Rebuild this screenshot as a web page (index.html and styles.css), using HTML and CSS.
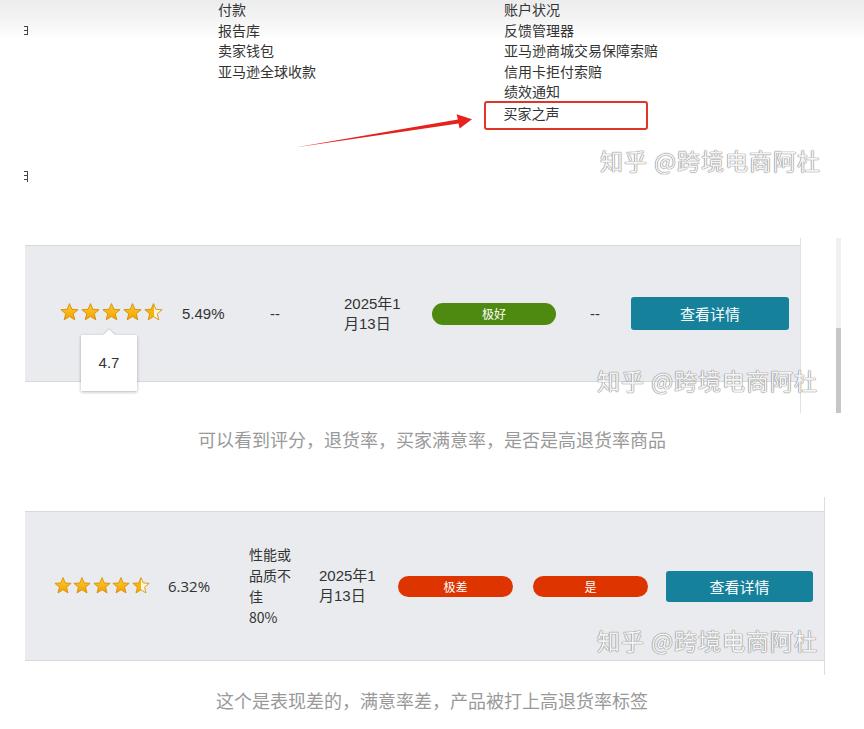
FILE: index.html
```html
<!DOCTYPE html>
<html lang="zh-CN">
<head>
    <meta charset="UTF-8">
    <meta name="viewport" content="width=device-width, initial-scale=1.0">
    <title>买家之声</title>
    <link rel="stylesheet" href="styles.css">
</head>
<body>

<svg class="defs" aria-hidden="true">
    <defs>
        <linearGradient id="gold" x1="0" y1="0" x2="0" y2="1">
            <stop offset="0" stop-color="#ffcb2e"/>
            <stop offset="1" stop-color="#f2a200"/>
        </linearGradient>
        <linearGradient id="half" x1="0" y1="0" x2="1" y2="0">
            <stop offset="0.5" stop-color="#f8b40c"/>
            <stop offset="0.5" stop-color="#fff7d8"/>
        </linearGradient>
        <symbol id="star" viewBox="0 0 20 20">
            <path d="M10 0.6 L12.47 6.6 L19.03 7.06 L13.99 11.3 L15.58 17.69 L10 14.2 L4.42 17.69 L6.01 11.3 L0.97 7.06 L7.53 6.6 Z" stroke="#d68a00" stroke-width="0.9" stroke-linejoin="round"/>
        </symbol>
    </defs>
</svg>

<!-- 菜单截图 -->
<div class="shot shot-menu">
    <div class="edge">
        <span class="edge-bit first"></span>
        <span class="edge-bit second"></span>
    </div>
    <ul class="menu col-left">
        <li>付款</li>
        <li>报告库</li>
        <li>卖家钱包</li>
        <li>亚马逊全球收款</li>
    </ul>
    <ul class="menu col-right">
        <li>账户状况</li>
        <li>反馈管理器</li>
        <li>亚马逊商城交易保障索赔</li>
        <li>信用卡拒付索赔</li>
        <li>绩效通知</li>
        <li class="boxed">买家之声</li>
    </ul>
    <svg class="arrow" width="180" height="40" viewBox="0 0 180 40">
        <polygon points="0,37.5 162.9,9.4 161.6,4.2 177,9.2 164.6,18.6 163.5,13.4" fill="#e5221c"/>
    </svg>
    <div class="mark mark-1">知乎 @跨境电商阿杜</div>
</div>

<!-- 表格截图一 -->
<div class="shot shot-table">
    <div class="frame frame-a">
        <div class="row row-a">
            <div class="cell stars-cell">
                <div class="stars">
                    <svg class="star"><use href="#star" fill="url(#gold)"/></svg>
                    <svg class="star"><use href="#star" fill="url(#gold)"/></svg>
                    <svg class="star"><use href="#star" fill="url(#gold)"/></svg>
                    <svg class="star"><use href="#star" fill="url(#gold)"/></svg>
                    <svg class="star"><use href="#star" fill="url(#half)"/></svg>
                </div>
                <div class="tip">4.7</div>
            </div>
            <div class="cell">5.49%</div>
            <div class="cell">--</div>
            <div class="cell date">2025年1<br>月13日</div>
            <div class="cell"><span class="pill good">极好</span></div>
            <div class="cell">--</div>
            <div class="cell"><span class="btn">查看详情</span></div>
        </div>
    </div>
    <div class="scrollbar"><div class="thumb"></div></div>
    <div class="mark mark-2">知乎 @跨境电商阿杜</div>
</div>

<p class="caption first-caption">可以看到评分，退货率，买家满意率，是否是高退货率商品</p>

<!-- 表格截图二 -->
<div class="shot shot-table second">
    <div class="frame frame-b">
        <div class="row row-b">
            <div class="cell">
                <div class="stars small">
                    <svg class="star"><use href="#star" fill="url(#gold)"/></svg>
                    <svg class="star"><use href="#star" fill="url(#gold)"/></svg>
                    <svg class="star"><use href="#star" fill="url(#gold)"/></svg>
                    <svg class="star"><use href="#star" fill="url(#gold)"/></svg>
                    <svg class="star"><use href="#star" fill="url(#half)"/></svg>
                </div>
            </div>
            <div class="cell pct">6.32%</div>
            <div class="cell reason">性能或<br>品质不<br>佳<br>80%</div>
            <div class="cell date">2025年1<br>月13日</div>
            <div class="cell"><span class="pill bad">极差</span></div>
            <div class="cell"><span class="pill bad">是</span></div>
            <div class="cell"><span class="btn small">查看详情</span></div>
        </div>
    </div>
    <div class="mark mark-3">知乎 @跨境电商阿杜</div>
</div>

<p class="caption">这个是表现差的，满意率差，产品被打上高退货率标签</p>

</body>
</html>
```

FILE: styles.css
```css
body {
    margin: 0;
    padding: 0;
    background-color: #ffffff;
    font-family: "Liberation Sans", "Noto Sans CJK SC", sans-serif;
    color: #333;
}

.defs {
    position: absolute;
    width: 0;
    height: 0;
}

.shot {
    position: relative;
}

/* 菜单 */
.shot-menu {
    height: 200px;
    display: flex;
    background: linear-gradient(#ececec, #f5f5f5 22px, #ffffff 40px);
    font-family: "Noto Sans CJK SC", sans-serif;
    font-size: 14px;
}

.edge {
    width: 4px;
    margin-left: 24px;
    display: flex;
    flex-direction: column;
}

/* 截图左边被裁掉的字 */
.edge-bit {
    display: block;
    width: 3px;
    height: 9px;
    background: repeating-linear-gradient(#444 0 1px, transparent 1px 4px);
    border-right: 1px solid #444;
}

.edge-bit.first {
    margin-top: 26px;
}

.edge-bit.second {
    margin-top: 136px;
    height: 11px;
}

.menu {
    list-style: none;
    margin: -1px 0 0;
    padding: 0;
}

.menu li {
    line-height: 20.6px;
    white-space: nowrap;
}

.col-left {
    margin-left: 190px;
    width: 286px;
}

.menu li.boxed {
    margin: -1px 0 0 -20px;
    width: 164px;
    box-sizing: border-box;
    border: 2.5px solid #e0352c;
    border-radius: 3px;
    padding: 0 0 5px 17.5px;
    line-height: 20px;
}

.arrow {
    position: absolute;
    left: 295px;
    top: 110px;
}

.mark {
    position: absolute;
    font-family: "Noto Sans CJK SC", sans-serif;
    font-size: 23px;
    line-height: 26px;
    letter-spacing: 1px;
    color: #f4f4f4;
    white-space: nowrap;
    text-shadow: 0 0 1px #8a8a8a, 0 0 1px #8a8a8a, 0 0 1px #8a8a8a;
}

.mark-1 {
    left: 600px;
    top: 147px;
}

/* 表格 */
.shot-table {
    display: flex;
    margin-top: 38px;
    height: 175px;
}

.shot-table.second {
    margin-top: 45px;
    height: 178px;
}

.frame {
    margin-left: 25px;
    box-sizing: border-box;
}

.frame-a {
    width: 776px;
    padding-top: 7px;
    border-right: 1px solid #e2e2e2;
}

.frame-b {
    width: 800px;
    padding-top: 14px;
    border-right: 1px solid #dedede;
}

.row {
    display: grid;
    align-items: center;
    box-sizing: border-box;
    background-color: #e9ebee;
    border-top: 1px solid #d9d9d9;
    border-bottom: 1px solid #d9d9d9;
}

.row-a {
    height: 137px;
    padding-left: 35px;
    grid-template-columns: 122px 88px 74px 88px 158px 41px 158px;
    font-size: 15px;
}

.row-b {
    height: 150px;
    padding-left: 29px;
    grid-template-columns: 114px 81px 70px 79px 135px 133px 147px;
    font-size: 15px;
    font-family: "Open Sans", "Noto Sans CJK SC", sans-serif;
}

.cell {
    white-space: nowrap;
}

.date {
    line-height: 20px;
    font-family: "Liberation Sans", "Noto Sans CJK SC", sans-serif;
}

.reason {
    font-family: "Noto Sans CJK SC", sans-serif;
    font-size: 14px;
    line-height: 21px;
}

.stars-cell {
    position: relative;
}

.stars {
    display: flex;
    gap: 1.9px;
    margin-top: -2px;
}

.star {
    width: 19px;
    height: 19px;
}

.stars.small {
    gap: 1.4px;
    margin-top: 0;
}

.stars.small .star {
    width: 18px;
    height: 18px;
}

.tip {
    position: absolute;
    left: 21px;
    top: 30px;
    width: 56px;
    height: 56px;
    background-color: #ffffff;
    box-shadow: 0 1px 3px rgba(0, 0, 0, 0.3);
    text-align: center;
    line-height: 56px;
    font-size: 15px;
    color: #333;
}

.tip::before {
    content: "";
    position: absolute;
    left: 24px;
    top: -4px;
    width: 8px;
    height: 8px;
    background-color: #ffffff;
    transform: rotate(45deg);
    box-shadow: -1px -1px 1px rgba(0, 0, 0, 0.12);
}

.pill {
    display: block;
    width: 124px;
    height: 22px;
    border-radius: 11px;
    color: #ffffff;
    text-align: center;
    font-family: "Noto Sans CJK SC", sans-serif;
    font-size: 12px;
    line-height: 22px;
}

.pill.good {
    background-color: #4e8a10;
}

.pill.bad {
    width: 115px;
    height: 21px;
    line-height: 21px;
    background-color: #dd3400;
}

.btn {
    display: block;
    width: 158px;
    height: 33px;
    border-radius: 3px;
    background-color: #16819a;
    color: #ffffff;
    text-align: center;
    font-family: "Noto Sans CJK SC", sans-serif;
    font-size: 15px;
    line-height: 33px;
}

.btn.small {
    width: 147px;
    height: 31px;
    line-height: 31px;
}

.scrollbar {
    margin-left: 35px;
    width: 5px;
    background-color: #f0f0f0;
    display: flex;
    flex-direction: column;
    justify-content: flex-end;
}

.thumb {
    height: 85px;
    background-color: #c6c6c6;
}

.mark-2 {
    left: 597px;
    top: 129px;
}

.mark-3 {
    left: 597px;
    top: 130px;
}

.caption {
    margin: 12px 0 0;
    text-align: center;
    font-family: "Noto Sans CJK SC", sans-serif;
    font-size: 18px;
    line-height: 26px;
    color: #999;
}

.first-caption {
    margin-top: 13px;
}
```
